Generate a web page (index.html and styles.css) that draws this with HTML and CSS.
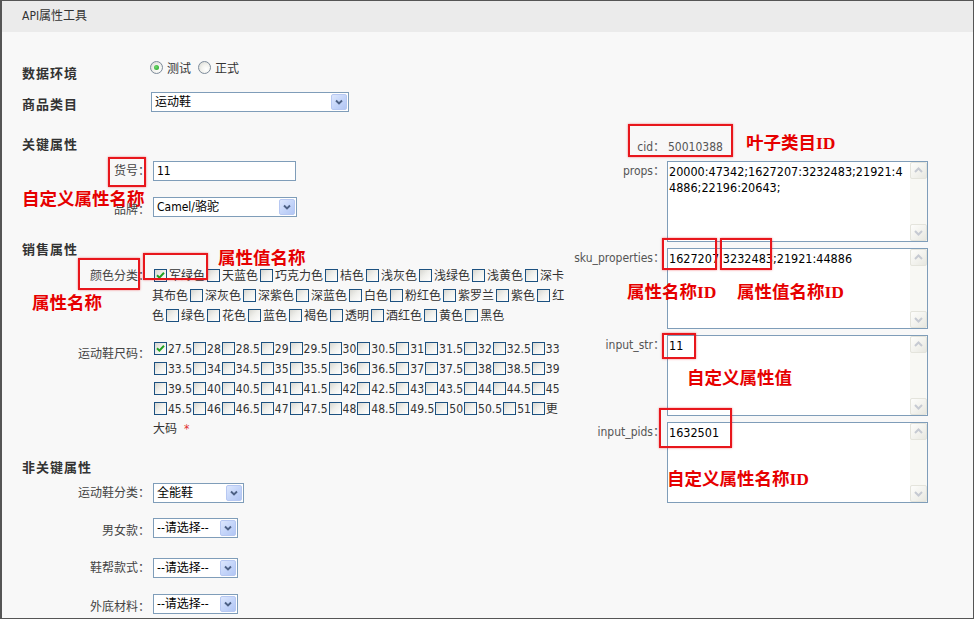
FILE: index.html
```html
<!DOCTYPE html>
<html lang="zh-CN">
<head>
<meta charset="utf-8">
<title>API属性工具</title>
<link rel="stylesheet" href="styles.css">
</head>
<body>
<div class="frame">
  <div class="titlebar">API属性工具</div>
  <div class="content">
    <div class="left">
      <div class="row row-env">
        <div class="head">数据环境</div>
        <div class="radios">
          <span class="radio on"></span><span class="rtext">测试</span><span class="radio"></span><span class="rtext">正式</span>
        </div>
      </div>
      <div class="row row-cat">
        <div class="head">商品类目</div>
        <div class="select w-cat"><span class="sel-text">运动鞋</span><span class="sel-btn"><svg viewBox="0 0 14 14" width="14" height="14"><path d="M4 5.5 L7 8.5 L10 5.5" fill="none" stroke="#4d6185" stroke-width="1.9"/></svg></span></div>
      </div>

      <div class="sect sect-key">关键属性</div>
      <div class="row row-hh">
        <div class="label">货号：</div>
        <div class="input">11</div>
      </div>
      <div class="row row-brand">
        <div class="label lbl-low">品牌：</div>
        <div class="select w-brand"><span class="sel-text">Camel/骆驼</span><span class="sel-btn"><svg viewBox="0 0 14 14" width="14" height="14"><path d="M4 5.5 L7 8.5 L10 5.5" fill="none" stroke="#4d6185" stroke-width="1.9"/></svg></span></div>
      </div>

      <div class="sect sect-sale">销售属性</div>
      <div class="row row-color">
        <div class="label">颜色分类：</div>
        <div class="list colors">
          <div class="line"><i class="cb on"><svg viewBox="0 0 11 11" width="11" height="11"><path d="M2 5.2 L4.4 7.6 L9 2.8" fill="none" stroke="#21a121" stroke-width="2"/></svg></i>军绿色<i class="cb"></i>天蓝色<i class="cb"></i>巧克力色<i class="cb"></i>桔色<i class="cb"></i>浅灰色<i class="cb"></i>浅绿色<i class="cb"></i>浅黄色<i class="cb"></i>深卡</div>
          <div class="line">其布色<i class="cb"></i>深灰色<i class="cb"></i>深紫色<i class="cb"></i>深蓝色<i class="cb"></i>白色<i class="cb"></i>粉红色<i class="cb"></i>紫罗兰<i class="cb"></i>紫色<i class="cb"></i>红</div>
          <div class="line">色<i class="cb"></i>绿色<i class="cb"></i>花色<i class="cb"></i>蓝色<i class="cb"></i>褐色<i class="cb"></i>透明<i class="cb"></i>酒红色<i class="cb"></i>黄色<i class="cb"></i>黑色</div>
        </div>
      </div>
      <div class="row row-size">
        <div class="label lbl-size">运动鞋尺码：</div>
        <div class="list sizes">
          <div class="line"><i class="cb on"><svg viewBox="0 0 11 11" width="11" height="11"><path d="M2 5.2 L4.4 7.6 L9 2.8" fill="none" stroke="#21a121" stroke-width="2"/></svg></i>27.5<i class="cb"></i>28<i class="cb"></i>28.5<i class="cb"></i>29<i class="cb"></i>29.5<i class="cb"></i>30<i class="cb"></i>30.5<i class="cb"></i>31<i class="cb"></i>31.5<i class="cb"></i>32<i class="cb"></i>32.5<i class="cb"></i>33</div>
          <div class="line"><i class="cb"></i>33.5<i class="cb"></i>34<i class="cb"></i>34.5<i class="cb"></i>35<i class="cb"></i>35.5<i class="cb"></i>36<i class="cb"></i>36.5<i class="cb"></i>37<i class="cb"></i>37.5<i class="cb"></i>38<i class="cb"></i>38.5<i class="cb"></i>39</div>
          <div class="line"><i class="cb"></i>39.5<i class="cb"></i>40<i class="cb"></i>40.5<i class="cb"></i>41<i class="cb"></i>41.5<i class="cb"></i>42<i class="cb"></i>42.5<i class="cb"></i>43<i class="cb"></i>43.5<i class="cb"></i>44<i class="cb"></i>44.5<i class="cb"></i>45</div>
          <div class="line"><i class="cb"></i>45.5<i class="cb"></i>46<i class="cb"></i>46.5<i class="cb"></i>47<i class="cb"></i>47.5<i class="cb"></i>48<i class="cb"></i>48.5<i class="cb"></i>49.5<i class="cb"></i>50<i class="cb"></i>50.5<i class="cb"></i>51<i class="cb"></i>更</div>
          <div class="line">大码<span class="req">*</span></div>
        </div>
      </div>

      <div class="sect sect-non">非关键属性</div>
      <div class="row row-s1">
        <div class="label">运动鞋分类：</div>
        <div class="select w-sport"><span class="sel-text">全能鞋</span><span class="sel-btn"><svg viewBox="0 0 14 14" width="14" height="14"><path d="M4 5.5 L7 8.5 L10 5.5" fill="none" stroke="#4d6185" stroke-width="1.9"/></svg></span></div>
      </div>
      <div class="row row-s2">
        <div class="label lbl-low">男女款：</div>
        <div class="select w-small"><span class="sel-text">--请选择--</span><span class="sel-btn"><svg viewBox="0 0 14 14" width="14" height="14"><path d="M4 5.5 L7 8.5 L10 5.5" fill="none" stroke="#4d6185" stroke-width="1.9"/></svg></span></div>
      </div>
      <div class="row row-s3">
        <div class="label">鞋帮款式：</div>
        <div class="select w-small"><span class="sel-text">--请选择--</span><span class="sel-btn"><svg viewBox="0 0 14 14" width="14" height="14"><path d="M4 5.5 L7 8.5 L10 5.5" fill="none" stroke="#4d6185" stroke-width="1.9"/></svg></span></div>
      </div>
      <div class="row row-s4">
        <div class="label lbl-low">外底材料：</div>
        <div class="select w-small"><span class="sel-text">--请选择--</span><span class="sel-btn"><svg viewBox="0 0 14 14" width="14" height="14"><path d="M4 5.5 L7 8.5 L10 5.5" fill="none" stroke="#4d6185" stroke-width="1.9"/></svg></span></div>
      </div>
    </div>

    <div class="right">
      <div class="rrow cid-row">
        <div class="rlabel">cid：</div>
        <div class="cid-val">50010388</div>
      </div>
      <div class="rrow field first">
        <div class="rlabel">props：</div>
        <div class="ta"><div class="ta-text">20000:47342;1627207:3232483;21921:4<br>4886;22196:20643;</div><div class="sb"><span class="sbtn"><svg viewBox="0 0 15 15" width="15" height="15"><path d="M4 9 L7.5 5.5 L11 9" fill="none" stroke="#c6cad2" stroke-width="2"/></svg></span><span class="sbtn"><svg viewBox="0 0 15 15" width="15" height="15"><path d="M4 6 L7.5 9.5 L11 6" fill="none" stroke="#c6cad2" stroke-width="2"/></svg></span></div></div>
      </div>
      <div class="rrow field">
        <div class="rlabel">sku_properties：</div>
        <div class="ta"><div class="ta-text">1627207:3232483;21921:44886</div><div class="sb"><span class="sbtn"><svg viewBox="0 0 15 15" width="15" height="15"><path d="M4 9 L7.5 5.5 L11 9" fill="none" stroke="#c6cad2" stroke-width="2"/></svg></span><span class="sbtn"><svg viewBox="0 0 15 15" width="15" height="15"><path d="M4 6 L7.5 9.5 L11 6" fill="none" stroke="#c6cad2" stroke-width="2"/></svg></span></div></div>
      </div>
      <div class="rrow field">
        <div class="rlabel">input_str：</div>
        <div class="ta"><div class="ta-text">11</div><div class="sb"><span class="sbtn"><svg viewBox="0 0 15 15" width="15" height="15"><path d="M4 9 L7.5 5.5 L11 9" fill="none" stroke="#c6cad2" stroke-width="2"/></svg></span><span class="sbtn"><svg viewBox="0 0 15 15" width="15" height="15"><path d="M4 6 L7.5 9.5 L11 6" fill="none" stroke="#c6cad2" stroke-width="2"/></svg></span></div></div>
      </div>
      <div class="rrow field">
        <div class="rlabel">input_pids：</div>
        <div class="ta"><div class="ta-text">1632501</div><div class="sb"><span class="sbtn"><svg viewBox="0 0 15 15" width="15" height="15"><path d="M4 9 L7.5 5.5 L11 9" fill="none" stroke="#c6cad2" stroke-width="2"/></svg></span><span class="sbtn"><svg viewBox="0 0 15 15" width="15" height="15"><path d="M4 6 L7.5 9.5 L11 6" fill="none" stroke="#c6cad2" stroke-width="2"/></svg></span></div></div>
      </div>
    </div>
  </div>

  <div class="mark m1"></div>
  <div class="mark m2"></div>
  <div class="mark m3"></div>
  <div class="mark m4"></div>
  <div class="mark m5"></div>
  <div class="mark m6"></div>
  <div class="mark m7"></div>
  <div class="mark m8"></div>

  <div class="note n1">自定义属性名称</div>
  <div class="note n2">属性值名称</div>
  <div class="note n3">属性名称</div>
  <div class="note n4">叶子类目<span class="id">ID</span></div>
  <div class="note n5">属性名称<span class="id">ID</span></div>
  <div class="note n6">属性值名称<span class="id">ID</span></div>
  <div class="note n7">自定义属性值</div>
  <div class="note n8">自定义属性名称<span class="id">ID</span></div>
</div>
</body>
</html>
```

FILE: styles.css
```css
* { box-sizing: border-box; }
html, body { margin: 0; padding: 0; }
body {
  width: 974px;
  height: 619px;
  overflow: hidden;
  background: #f8f8f8;
  font-family: "DejaVu Sans Condensed", "Liberation Sans", "Noto Sans CJK SC", sans-serif;
  font-size: 12px;
  color: #333;
}
.frame {
  position: relative;
  width: 974px;
  height: 619px;
  border-style: solid;
  border-color: #555;
  border-width: 1px 1px 1px 2px;
  background: #f8f8f8;
}
.titlebar {
  height: 31px;
  line-height: 31px;
  padding-left: 20px;
  background: #ebebeb;
  color: #333;
}
.content { display: flex; }
.left { width: 566px; padding-left: 20px; }
.right { width: 360px; }

/* rows */
.row { display: flex; align-items: flex-start; }
.head {
  width: 129px;
  font-family: "Noto Sans CJK SC", sans-serif;
  font-weight: bold;
  font-size: 13px;
  letter-spacing: 1px;
  line-height: 20px;
  color: #333;
}
.sect {
  font-family: "Noto Sans CJK SC", sans-serif;
  font-weight: bold;
  font-size: 13px;
  letter-spacing: 1px;
  line-height: 20px;
  color: #333;
}
.label {
  width: 128px;
  margin-right: 3px;
  text-align: right;
  line-height: 20px;
  color: #444;
  white-space: nowrap;
}
.lbl-low { padding-top: 3px; }
.lbl-size { padding-top: 5px; }

.row-env { margin-top: 31px; height: 20px; }
.row-cat { margin-top: 9px; height: 20px; }
.row-cat .head { padding-top: 2px; }
.sect-key { margin-top: 22px; }
.row-hh { margin-top: 7px; }
.row-brand { margin-top: 16px; }
.sect-sale { margin-top: 19px; }
.row-color { margin-top: 7px; }
.row-size { margin-top: 13px; }
.sect-non { margin-top: 18px; }
.row-s1 { margin-top: 6px; }
.row-s2 { margin-top: 15px; }
.row-s3 { margin-top: 17px; }
.row-s4 { margin-top: 16px; }

/* radios */
.radios {
  display: flex;
  align-items: center;
  height: 14px;
  margin-top: -1px;
  margin-left: -1px;
  line-height: 14px;
  color: #333;
}
.radio {
  position: relative;
  display: inline-block;
  width: 13px;
  height: 13px;
  margin-right: 4px;
  margin-top: -3px;
  border: 1px solid #7d8b9b;
  border-radius: 50%;
  background: radial-gradient(circle at 65% 65%, #ffffff 0%, #f2f2ee 45%, #d6d6d0 100%);
}
.radio.on::after {
  content: "";
  position: absolute;
  left: 3px;
  top: 3px;
  width: 5px;
  height: 5px;
  border-radius: 50%;
  background: radial-gradient(circle at 40% 40%, #6fd86f, #21a121);
}
.rtext + .radio { margin-left: 7px; }

/* select */
.select {
  display: flex;
  align-items: center;
  height: 20px;
  padding: 1px;
  border: 1px solid #7f9db9;
  background: #fff;
  color: #000;
}
.sel-text { padding-left: 2px; white-space: nowrap; line-height: 16px; }
.sel-btn {
  margin-left: auto;
  display: flex;
  align-items: center;
  justify-content: center;
  width: 16px;
  height: 16px;
  border: 1px solid #b7c8f2;
  border-radius: 2px;
  background: linear-gradient(135deg, #dde7fd 0%, #c3d4f9 55%, #b2c6f4 100%);
}
.w-cat { width: 198px; }
.w-brand { width: 144px; }
.w-sport { width: 91px; }
.w-small { width: 85px; }

.input {
  width: 143px;
  height: 20px;
  padding-left: 3px;
  border: 1px solid #7f9db9;
  background: #fff;
  color: #000;
  line-height: 18px;
}

/* checkbox lists */
.list { color: #333; }
.line { height: 20px; line-height: 20px; white-space: nowrap; }
.cb {
  position: relative;
  display: inline-block;
  width: 13px;
  height: 13px;
  margin: 0 1px;
  vertical-align: -2px;
  border: 1px solid #1c5180;
  background: linear-gradient(135deg, #d6d6d0 0%, #efefeb 45%, #ffffff 100%);
}
.cb svg { position: absolute; left: 0; top: 0; }
.colors { margin-left: -1px; }
.colors .cb { margin: 0 2px; }
.req { color: #e03030; margin-left: 7px; }

/* right column */
.rrow { display: flex; }
.rlabel {
  width: 97px;
  text-align: right;
  color: #555;
  white-space: nowrap;
}
.cid-row { margin-top: 105px; height: 20px; line-height: 20px; }
.cid-val { margin-left: 3px; color: #555; }
.field { margin-top: 6px; }
.field.first { margin-top: 4px; }
.field .rlabel { padding-top: 2px; line-height: 16px; }
.ta {
  display: flex;
  width: 261px;
  height: 81px;
  margin-left: 2px;
  border: 1px solid #7f9db9;
  background: #fff;
}
.ta-text {
  flex: 1;
  padding: 2px 0 0 1px;
  font-size: 12.5px;
  line-height: 16px;
  color: #000;
  white-space: nowrap;
}
.sb {
  display: flex;
  flex-direction: column;
  justify-content: space-between;
  width: 17px;
  background: #f8f8f4;
}
.sbtn {
  display: flex;
  align-items: center;
  justify-content: center;
  width: 17px;
  height: 17px;
  border: 1px solid #e4e4dc;
  border-radius: 2px;
  background: linear-gradient(135deg, #fdfdfb 0%, #f1f1ec 60%, #e7e7e0 100%);
}

/* annotations drawn over the form */
.mark {
  position: absolute;
  border: 2px solid #e8161c;
  box-shadow: 0 0 2px rgba(232, 22, 28, 0.55);
}
.m1 { left: 106px; top: 156px; width: 38px; height: 30px; }
.m2 { left: 76px; top: 257px; width: 62px; height: 32px; }
.m3 { left: 141px; top: 252px; width: 65px; height: 27px; }
.m4 { left: 626px; top: 123px; width: 105px; height: 33px; }
.m5 { left: 660px; top: 237px; width: 55px; height: 32px; }
.m6 { left: 718px; top: 237px; width: 52px; height: 32px; }
.m7 { left: 660px; top: 332px; width: 34px; height: 26px; }
.m8 { left: 657px; top: 407px; width: 73px; height: 40px; }

.note {
  position: absolute;
  font-family: "Noto Sans CJK SC", sans-serif;
  font-weight: bold;
  font-size: 17.5px;
  line-height: 18px;
  color: #e60000;
  white-space: nowrap;
}
.note .id { font-family: "Liberation Serif", serif; font-weight: bold; }
.n1 { left: 20px; top: 188px; }
.n2 { left: 216px; top: 247px; }
.n3 { left: 30px; top: 292px; }
.n4 { left: 744px; top: 132px; }
.n5 { left: 625px; top: 281px; }
.n6 { left: 735px; top: 281px; }
.n7 { left: 685px; top: 367px; }
.n8 { left: 665px; top: 468px; }
```
